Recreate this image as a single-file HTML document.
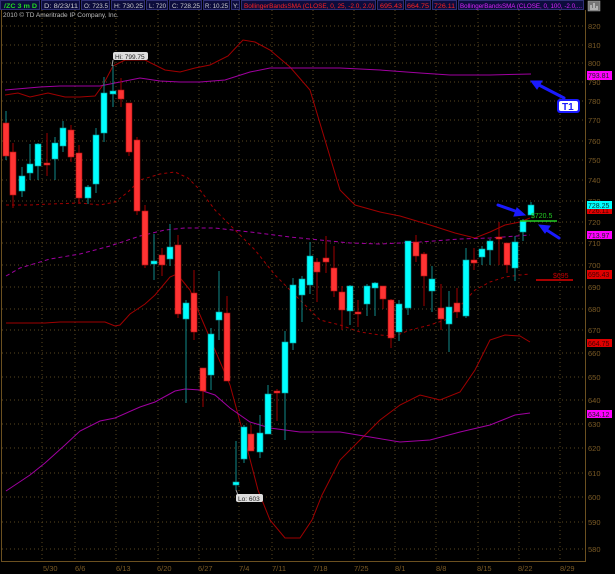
<!DOCTYPE html>
<html><head><meta charset="utf-8"><style>
html,body{margin:0;padding:0;background:#000;}
body{width:615px;height:574px;overflow:hidden;position:relative;font-family:"Liberation Sans",sans-serif;}
svg{position:absolute;left:0;top:0;}
</style></head><body>
<svg width="615" height="574" viewBox="0 0 615 574" xmlns="http://www.w3.org/2000/svg" font-family="Liberation Sans, sans-serif">
<rect width="615" height="574" fill="#000"/>
<g stroke="#5a4820" stroke-width="1" stroke-dasharray="1,3">
<line x1="2" x2="585" y1="26" y2="26"/><line x1="2" x2="585" y1="45" y2="45"/><line x1="2" x2="585" y1="63" y2="63"/><line x1="2" x2="585" y1="82" y2="82"/><line x1="2" x2="585" y1="101" y2="101"/><line x1="2" x2="585" y1="120" y2="120"/><line x1="2" x2="585" y1="141" y2="141"/><line x1="2" x2="585" y1="160" y2="160"/><line x1="2" x2="585" y1="180" y2="180"/><line x1="2" x2="585" y1="201" y2="201"/><line x1="2" x2="585" y1="222" y2="222"/><line x1="2" x2="585" y1="243" y2="243"/><line x1="2" x2="585" y1="265" y2="265"/><line x1="2" x2="585" y1="287" y2="287"/><line x1="2" x2="585" y1="309" y2="309"/><line x1="2" x2="585" y1="330" y2="330"/><line x1="2" x2="585" y1="353" y2="353"/><line x1="2" x2="585" y1="377" y2="377"/><line x1="2" x2="585" y1="400" y2="400"/><line x1="2" x2="585" y1="424" y2="424"/><line x1="2" x2="585" y1="448" y2="448"/><line x1="2" x2="585" y1="473" y2="473"/><line x1="2" x2="585" y1="497" y2="497"/><line x1="2" x2="585" y1="522" y2="522"/><line x1="2" x2="585" y1="549" y2="549"/>
<line x1="42" x2="42" y1="10" y2="561"/><line x1="75" x2="75" y1="10" y2="561"/><line x1="116" x2="116" y1="10" y2="561"/><line x1="158" x2="158" y1="10" y2="561"/><line x1="199" x2="199" y1="10" y2="561"/><line x1="239" x2="239" y1="10" y2="561"/><line x1="272" x2="272" y1="10" y2="561"/><line x1="313" x2="313" y1="10" y2="561"/><line x1="354" x2="354" y1="10" y2="561"/><line x1="395" x2="395" y1="10" y2="561"/><line x1="436" x2="436" y1="10" y2="561"/><line x1="478" x2="478" y1="10" y2="561"/><line x1="519" x2="519" y1="10" y2="561"/><line x1="560" x2="560" y1="10" y2="561"/>
</g>
<g stroke="#6b5020" stroke-width="1">
<line x1="1.5" y1="10" x2="1.5" y2="561"/><line x1="1" y1="561.5" x2="585" y2="561.5"/><line x1="585.5" y1="10" x2="585.5" y2="562"/>
</g>
<g fill="#7a5a25" font-size="7.5">
<text x="588" y="29">820</text><text x="588" y="48">810</text><text x="588" y="66">800</text><text x="588" y="85">790</text><text x="588" y="104">780</text><text x="588" y="123">770</text><text x="588" y="144">760</text><text x="588" y="163">750</text><text x="588" y="183">740</text><text x="588" y="204">730</text><text x="588" y="225">720</text><text x="588" y="246">710</text><text x="588" y="268">700</text><text x="588" y="290">690</text><text x="588" y="312">680</text><text x="588" y="333">670</text><text x="588" y="356">660</text><text x="588" y="380">650</text><text x="588" y="403">640</text><text x="588" y="427">630</text><text x="588" y="451">620</text><text x="588" y="476">610</text><text x="588" y="500">600</text><text x="588" y="525">590</text><text x="588" y="552">580</text>
<text x="43" y="571">5/30</text><text x="75" y="571">6/6</text><text x="116" y="571">6/13</text><text x="157" y="571">6/20</text><text x="198" y="571">6/27</text><text x="239" y="571">7/4</text><text x="272" y="571">7/11</text><text x="313" y="571">7/18</text><text x="354" y="571">7/25</text><text x="395" y="571">8/1</text><text x="436" y="571">8/8</text><text x="477" y="571">8/15</text><text x="518" y="571">8/22</text><text x="560" y="571">8/29</text>
</g>
<g fill="none" stroke-width="1">
<polyline stroke="#a00000" points="5,95 18,93 30,97 48,93 65,97 80,97 95,96 103,85 113,66 125,60 145,60 165,70 180,72 195,68 210,65 228,56 243,40 255,42 270,50 290,67 310,90 325,140 340,190 355,205 380,212 400,216 430,225 455,233 475,238 490,232 505,225 520,222 530,218"/>
<polyline stroke="#a00000" points="6,323 45,323 60,322 105,322 115,326 120,325 130,314 145,304 155,295 170,277 177,274 190,290 200,315 215,350 230,385 245,440 258,490 270,520 285,538 300,538 312,520 322,495 340,460 360,440 380,420 400,405 420,395 440,400 460,392 475,370 490,340 505,335 520,336 530,342"/>
<polyline stroke="#a00000" stroke-dasharray="3,3" points="6,205 30,205 50,204 80,203 100,205 115,202 128,192 140,180 160,174 175,172 188,178 200,190 215,210 235,230 255,250 275,275 290,290 305,305 320,320 340,325 360,332 380,335 395,336 410,330 430,325 445,320 460,306 475,290 490,282 505,277 520,275 530,274"/>
<polyline stroke="#a000a0" points="5,90 40,87 60,86 100,86 120,82 140,78 160,81 180,82 200,82 225,80 250,72 270,68 300,68 340,68 380,70 420,73 450,75 490,75 531,74"/>
<polyline stroke="#a000a0" stroke-dasharray="4,3" points="6,276 20,268 50,259 80,254 110,246 140,236 165,230 185,228 215,228 250,232 290,237 320,240 350,243 380,244 420,242 460,239 490,238 530,235"/>
<polyline stroke="#a000a0" points="6,491 30,475 45,463 65,445 80,431 100,421 115,418 140,407 155,402 175,391 185,389 200,390 215,395 230,408 250,422 270,428 300,432 340,432 370,437 400,442 430,440 460,432 490,425 515,415 530,413"/>
</g>
<g>
<g stroke="#108a8a"><line x1="6" x2="6" y1="111" y2="160"/><line x1="22" x2="22" y1="167" y2="197"/><line x1="30" x2="30" y1="144" y2="180"/><line x1="38" x2="38" y1="143" y2="180"/><line x1="55" x2="55" y1="137" y2="180"/><line x1="63" x2="63" y1="121" y2="152"/><line x1="88" x2="88" y1="185" y2="204"/><line x1="96" x2="96" y1="128" y2="193"/><line x1="104" x2="104" y1="77" y2="142"/><line x1="113" x2="113" y1="65" y2="107"/><line x1="154" x2="154" y1="234" y2="280"/><line x1="170" x2="170" y1="224" y2="266"/><line x1="186" x2="186" y1="300" y2="403"/><line x1="211" x2="211" y1="328" y2="390"/><line x1="219" x2="219" y1="271" y2="340"/><line x1="236" x2="236" y1="441" y2="490"/><line x1="244" x2="244" y1="425" y2="463"/><line x1="260" x2="260" y1="415" y2="458"/><line x1="268" x2="268" y1="385" y2="434"/><line x1="285" x2="285" y1="331" y2="440"/><line x1="293" x2="293" y1="278" y2="350"/><line x1="302" x2="302" y1="276" y2="322"/><line x1="310" x2="310" y1="242" y2="294"/><line x1="350" x2="350" y1="285" y2="325"/><line x1="367" x2="367" y1="284" y2="316"/><line x1="375" x2="375" y1="282" y2="316"/><line x1="399" x2="399" y1="300" y2="341"/><line x1="408" x2="408" y1="241" y2="315"/><line x1="432" x2="432" y1="266" y2="312"/><line x1="449" x2="449" y1="291" y2="352"/><line x1="466" x2="466" y1="248" y2="318"/><line x1="482" x2="482" y1="246" y2="265"/><line x1="490" x2="490" y1="239" y2="265"/><line x1="515" x2="515" y1="236" y2="281"/><line x1="523" x2="523" y1="219" y2="241"/><line x1="531" x2="531" y1="202" y2="215"/></g>
<g stroke="#a00000"><line x1="13" x2="13" y1="143" y2="208"/><line x1="47" x2="47" y1="133" y2="176"/><line x1="71" x2="71" y1="125" y2="162"/><line x1="79" x2="79" y1="145" y2="203"/><line x1="121" x2="121" y1="78" y2="107"/><line x1="129" x2="129" y1="103" y2="156"/><line x1="137" x2="137" y1="137" y2="215"/><line x1="145" x2="145" y1="205" y2="268"/><line x1="162" x2="162" y1="248" y2="276"/><line x1="178" x2="178" y1="235" y2="318"/><line x1="194" x2="194" y1="270" y2="340"/><line x1="203" x2="203" y1="368" y2="407"/><line x1="227" x2="227" y1="296" y2="381"/><line x1="251" x2="251" y1="425" y2="451"/><line x1="277" x2="277" y1="389" y2="421"/><line x1="317" x2="317" y1="258" y2="302"/><line x1="326" x2="326" y1="236" y2="273"/><line x1="334" x2="334" y1="246" y2="297"/><line x1="342" x2="342" y1="286" y2="330"/><line x1="358" x2="358" y1="300" y2="327"/><line x1="383" x2="383" y1="286" y2="309"/><line x1="391" x2="391" y1="299" y2="348"/><line x1="416" x2="416" y1="235" y2="262"/><line x1="424" x2="424" y1="252" y2="306"/><line x1="441" x2="441" y1="284" y2="330"/><line x1="457" x2="457" y1="288" y2="318"/><line x1="474" x2="474" y1="248" y2="270"/><line x1="499" x2="499" y1="222" y2="265"/><line x1="507" x2="507" y1="243" y2="273"/></g>
<g fill="#00ffff" stroke="#0a9a9a" stroke-width="0.6"><rect x="19" y="176" width="6" height="15"/><rect x="27" y="164" width="6" height="9"/><rect x="35" y="144" width="6" height="22"/><rect x="52" y="143" width="6" height="16"/><rect x="60" y="128" width="6" height="18"/><rect x="85" y="187" width="6" height="11"/><rect x="93" y="135" width="6" height="49"/><rect x="101" y="93" width="6" height="40"/><rect x="110" y="91" width="6" height="3"/><rect x="151" y="261" width="6" height="3"/><rect x="167" y="247" width="6" height="12"/><rect x="183" y="303" width="6" height="16"/><rect x="208" y="334" width="6" height="41"/><rect x="216" y="312" width="6" height="8"/><rect x="233" y="482" width="6" height="3"/><rect x="241" y="427" width="6" height="32"/><rect x="257" y="433" width="6" height="19"/><rect x="265" y="394" width="6" height="40"/><rect x="282" y="342" width="6" height="51"/><rect x="290" y="285" width="6" height="58"/><rect x="299" y="279" width="6" height="16"/><rect x="307" y="256" width="6" height="29"/><rect x="347" y="286" width="6" height="25"/><rect x="364" y="286" width="6" height="18"/><rect x="372" y="283" width="6" height="5"/><rect x="396" y="304" width="6" height="28"/><rect x="405" y="241" width="6" height="67"/><rect x="429" y="279" width="6" height="12"/><rect x="446" y="307" width="6" height="17"/><rect x="463" y="260" width="6" height="56"/><rect x="479" y="249" width="6" height="8"/><rect x="487" y="241" width="6" height="9"/><rect x="512" y="242" width="6" height="26"/><rect x="520" y="221" width="6" height="11"/><rect x="528" y="205" width="6" height="10"/></g>
<g fill="#ff3333" stroke="#b01010" stroke-width="0.6"><rect x="3" y="123" width="6" height="33"/><rect x="10" y="152" width="6" height="43"/><rect x="44" y="163" width="6" height="2"/><rect x="68" y="130" width="6" height="27"/><rect x="76" y="153" width="6" height="45"/><rect x="118" y="90" width="6" height="9"/><rect x="126" y="103" width="6" height="49"/><rect x="134" y="140" width="6" height="71"/><rect x="142" y="211" width="6" height="54"/><rect x="159" y="255" width="6" height="10"/><rect x="175" y="245" width="6" height="69"/><rect x="191" y="293" width="6" height="39"/><rect x="200" y="368" width="6" height="23"/><rect x="224" y="313" width="6" height="68"/><rect x="248" y="434" width="6" height="17"/><rect x="274" y="391" width="6" height="2"/><rect x="314" y="262" width="6" height="10"/><rect x="323" y="258" width="6" height="4"/><rect x="331" y="268" width="6" height="23"/><rect x="339" y="292" width="6" height="18"/><rect x="355" y="312" width="6" height="2"/><rect x="380" y="286" width="6" height="13"/><rect x="388" y="300" width="6" height="38"/><rect x="413" y="242" width="6" height="14"/><rect x="421" y="254" width="6" height="22"/><rect x="438" y="308" width="6" height="11"/><rect x="454" y="303" width="6" height="9"/><rect x="471" y="260" width="6" height="3"/><rect x="496" y="237" width="6" height="2"/><rect x="504" y="243" width="6" height="22"/></g>
</g>
<line x1="113" y1="60" x2="112" y2="66" stroke="#aaa"/>
<rect x="113" y="52" width="35" height="8" rx="2" fill="#ddd"/><text x="115" y="59" font-size="6.5" fill="#222">Hi: 799.75</text>
<line x1="236" y1="490" x2="238" y2="495" stroke="#aaa"/>
<rect x="236" y="494" width="27" height="8" rx="2" fill="#ddd"/><text x="238" y="501" font-size="6.5" fill="#222">Lo: 603</text>
<line x1="520" y1="221" x2="557" y2="221" stroke="#22cc22" stroke-width="1.5"/>
<text x="531" y="218" font-size="7" fill="#22cc22">$720.5</text>
<line x1="536" y1="280" x2="573" y2="280" stroke="#e00000" stroke-width="1.5"/>
<text x="553" y="278" font-size="7" fill="#c00000">$695</text>
<g font-size="7">
<rect x="587" y="71" width="25" height="9" fill="#ff00ff"/><text x="588" y="78" fill="#222">793.81</text>
<rect x="587" y="206" width="25" height="8" fill="#e00000"/><text x="588" y="213" fill="#400">726.11</text>
<rect x="587" y="201" width="25" height="8" fill="#00ffff"/><text x="588" y="208" fill="#033">728.25</text>
<rect x="587" y="231" width="25" height="8" fill="#ff00ff"/><text x="588" y="238" fill="#222">713.97</text>
<rect x="587" y="270" width="25" height="9" fill="#e00000"/><text x="588" y="277" fill="#400">695.43</text>
<rect x="587" y="339" width="25" height="8" fill="#e00000"/><text x="588" y="346" fill="#400">664.75</text>
<rect x="587" y="410" width="25" height="8" fill="#ff00ff"/><text x="588" y="417" fill="#222">634.12</text>
</g>
<g stroke="#1a1aff" stroke-width="3" fill="#1a1aff" stroke-linecap="round">
<line x1="564" y1="98" x2="537" y2="84"/><polygon points="531,81 542,81 537,89" stroke-width="1"/>
<line x1="498" y1="205" x2="518" y2="212"/><polygon points="525,215 514,216 517,208" stroke-width="1"/>
<line x1="559" y1="238" x2="545" y2="229"/><polygon points="539,225 550,226 545,233" stroke-width="1"/>
</g>
<rect x="557" y="99" width="23" height="14" rx="3" fill="#1a1aff"/>
<rect x="559" y="101" width="19" height="10" rx="2" fill="#fff"/>
<text x="562" y="110" font-size="10" fill="#1a1aff" font-weight="bold">T1</text>
<rect x="0" y="0" width="615" height="10" fill="#000"/>
<g stroke="#3a3a8a" stroke-width="0.8" fill="#0c0c3c">
<rect x="0.5" y="0.5" width="39" height="9"/><rect x="41.5" y="0.5" width="38" height="9"/><rect x="81.5" y="0.5" width="28" height="9"/><rect x="111.5" y="0.5" width="33" height="9"/><rect x="146.5" y="0.5" width="21" height="9"/><rect x="169.5" y="0.5" width="32" height="9"/><rect x="203.5" y="0.5" width="26" height="9"/><rect x="231.5" y="0.5" width="8" height="9"/><rect x="241.5" y="0.5" width="134" height="9"/><rect x="377.5" y="0.5" width="26" height="9"/><rect x="405.5" y="0.5" width="25" height="9"/><rect x="432.5" y="0.5" width="24" height="9"/><rect x="458.5" y="0.5" width="125" height="9"/>
</g>
<g font-size="6.5">
<text x="4" y="8" fill="#22dd22" font-weight="bold" textLength="33" lengthAdjust="spacingAndGlyphs">/ZC 3 m D</text>
<text x="44" y="8" fill="#ccc" textLength="34" lengthAdjust="spacingAndGlyphs">D: 8/23/11</text>
<text x="84" y="8" fill="#ccc" textLength="24" lengthAdjust="spacingAndGlyphs">O: 723.5</text>
<text x="114" y="8" fill="#ccc" textLength="29" lengthAdjust="spacingAndGlyphs">H: 730.25</text>
<text x="149" y="8" fill="#ccc" textLength="17" lengthAdjust="spacingAndGlyphs">L: 720</text>
<text x="172" y="8" fill="#ccc" textLength="28" lengthAdjust="spacingAndGlyphs">C: 728.25</text>
<text x="205" y="8" fill="#ccc" textLength="23" lengthAdjust="spacingAndGlyphs">R: 10.25</text>
<text x="233" y="8" fill="#ccc">Y:</text>
<text x="244" y="8" fill="#ff2222" textLength="130" lengthAdjust="spacingAndGlyphs">BollingerBandsSMA (CLOSE, 0, 25, -2.0, 2.0)</text>
<text x="380" y="8" fill="#ff2222" textLength="22" lengthAdjust="spacingAndGlyphs">695.43</text>
<text x="407" y="8" fill="#ff2222" textLength="22" lengthAdjust="spacingAndGlyphs">664.75</text>
<text x="434" y="8" fill="#ff2222" textLength="21" lengthAdjust="spacingAndGlyphs">726.11</text>
<text x="460" y="8" fill="#dd22ff" textLength="122" lengthAdjust="spacingAndGlyphs">BollingerBandsSMA (CLOSE, 0, 100, -2.0,...</text>
</g>
<rect x="588" y="1" width="12" height="10" fill="#777" stroke="#aaa" stroke-width="0.5"/>
<path d="M590,9 h8 M591,8 v-3 M594,8 v-5 M597,8 v-2" stroke="#eee" stroke-width="1"/>
<text x="3" y="17" font-size="6.5" fill="#bbb">2010 © TD Ameritrade IP Company, Inc.</text>
</svg>
</body></html>
